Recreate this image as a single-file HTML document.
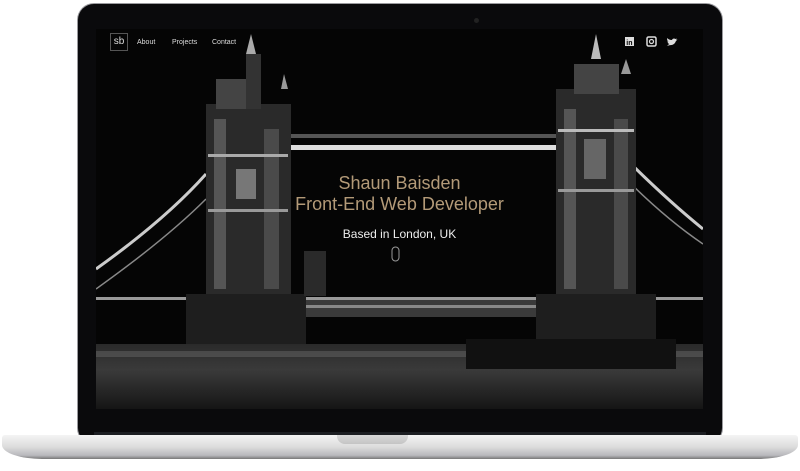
<!DOCTYPE html>
<html><head><meta charset="utf-8"><style>
html,body{margin:0;padding:0;background:#fff;width:800px;height:471px;overflow:hidden;font-family:"Liberation Sans",sans-serif}
.bezel{position:absolute;left:78px;top:4px;width:644px;height:440px;background:#0a0a0c;border-radius:16px;box-shadow:0 0 0 1px #9a9a9e}
.cam{position:absolute;left:396px;top:14px;width:5px;height:5px;border-radius:50%;background:#222}
.screen{position:absolute;left:96px;top:29px;width:607px;height:380px;background:#050505;overflow:hidden}
.base{position:absolute;left:2px;top:435px;width:796px;height:24px;background:linear-gradient(#f4f4f4,#dcdcdc 50%,#b8b8bc 85%,#777 100%);border-radius:3px 3px 40px 40px/3px 3px 14px 14px}
.notch{position:absolute;top:435px;width:71px;height:9px;background:linear-gradient(#d8d8d8,#c4c4c4);border-radius:0 0 8px 8px}
.hinge{position:absolute;left:94px;top:432px;width:612px;height:4px;background:#1c1e22}
nav a{position:absolute;color:#ddd;font-size:7px;top:10px}
.logo{position:absolute;left:14px;top:4px;width:16px;height:16px;border:1px solid #555;color:#ddd;font-size:10px;text-align:center;line-height:15px}
.t{position:absolute;width:607px;text-align:center;color:#b39a78;font-size:18px;line-height:21px}
</style></head><body>
<div class="bezel"><div class="cam"></div></div>
<div class="hinge"></div>
<div class="screen">
<svg width="607" height="380" style="position:absolute;left:0;top:0">
<defs><linearGradient id="w" x1="0" y1="0" x2="0" y2="1"><stop offset="0" stop-color="#2a2a2a"/><stop offset="0.4" stop-color="#3a3a3a"/><stop offset="1" stop-color="#151515"/></linearGradient></defs>
<rect x="0" y="315" width="607" height="65" fill="url(#w)"/>
<rect x="0" y="322" width="607" height="6" fill="#666" opacity=".5"/>
<rect x="160" y="116" width="300" height="5" fill="#ddd"/>
<rect x="160" y="105" width="300" height="4" fill="#555"/>
<rect x="185" y="268" width="260" height="20" fill="#3a3a3a"/>
<rect x="190" y="276" width="250" height="3" fill="#888"/>
<rect x="0" y="268" width="607" height="3" fill="#999"/>
<path d="M0 240 Q70 190 110 145" stroke="#ccc" stroke-width="3" fill="none"/>
<path d="M0 260 Q70 210 110 170" stroke="#888" stroke-width="1.5" fill="none"/>
<path d="M530 130 Q570 170 607 200" stroke="#ccc" stroke-width="3" fill="none"/>
<path d="M530 150 Q570 190 607 215" stroke="#888" stroke-width="1.5" fill="none"/>
<rect x="110" y="75" width="85" height="190" fill="#2a2a2a"/>
<rect x="118" y="90" width="12" height="170" fill="#555"/>
<rect x="168" y="100" width="15" height="160" fill="#4a4a4a"/>
<rect x="112" y="180" width="80" height="3" fill="#999"/>
<rect x="112" y="125" width="80" height="3" fill="#aaa"/>
<rect x="140" y="140" width="20" height="30" fill="#777"/>
<rect x="120" y="50" width="30" height="30" fill="#444"/>
<polygon points="150,25 155,5 160,25" fill="#aaa"/>
<polygon points="185,60 188,45 192,60" fill="#999"/>
<rect x="150" y="25" width="15" height="55" fill="#333"/>
<rect x="90" y="265" width="120" height="50" fill="#1e1e1e"/>
<rect x="460" y="60" width="80" height="205" fill="#2a2a2a"/>
<rect x="468" y="80" width="12" height="180" fill="#555"/>
<rect x="518" y="90" width="14" height="170" fill="#4a4a4a"/>
<rect x="462" y="100" width="76" height="3" fill="#bbb"/>
<rect x="462" y="160" width="76" height="3" fill="#999"/>
<rect x="488" y="110" width="22" height="40" fill="#666"/>
<polygon points="495,30 500,5 505,30" fill="#bbb"/>
<polygon points="525,45 530,30 535,45" fill="#999"/>
<rect x="478" y="35" width="45" height="30" fill="#444"/>
<rect x="440" y="265" width="120" height="45" fill="#1e1e1e"/>
<rect x="370" y="310" width="210" height="30" fill="#111"/>
<rect x="208" y="222" width="22" height="45" fill="#2a2a2a"/>
<rect x="296" y="218" width="7" height="14" rx="3.5" fill="none" stroke="#999" stroke-width="1"/>
</svg>
<div class="logo">sb</div>
<nav><a style="left:41px">About</a><a style="left:76px">Projects</a><a style="left:116px">Contact</a></nav>
<svg width="70" height="14" style="position:absolute;left:528px;top:7px">
<rect x="1" y="1" width="9" height="9" fill="#ddd"/><text x="2.3" y="9" font-size="7" font-weight="bold" fill="#000" font-family="Liberation Sans">in</text>
<rect x="23" y="1" width="9" height="9" rx="1.5" fill="none" stroke="#ddd" stroke-width="1.5"/><circle cx="27.5" cy="5.5" r="2" fill="none" stroke="#ddd" stroke-width="1.2"/>
<path d="M45 9 q5 1 7-4 l1.5-1.5 -1.5 .3 .8-1.3 -1.5.5 q-2-1.5-3.5 1 q-3 0-4.5-2 q-.8 2.5 1.2 3.5 -1 0-1.2-.4 q.3 2 2 2.4 -1 .4-1.5 0 q.6 1.5 2 1.6 q-1.5 1-3 .5z" fill="#ddd"/>
</svg>
<div class="t" style="top:144px">Shaun Baisden</div>
<div class="t" style="top:165px">Front-End Web Developer</div>
<div class="t" style="top:195px;font-size:12px;color:#eee">Based in London, UK</div>
</div>
<div class="base"></div>
<div class="notch" style="left:337px"></div>
</body></html>
